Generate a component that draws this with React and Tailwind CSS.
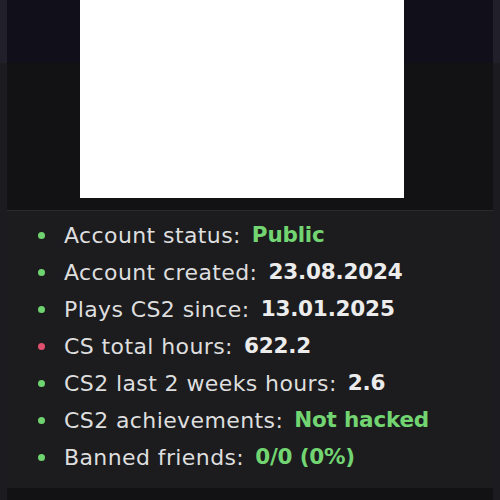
export default function App() {
  const rows = [
    { dot: "bg-[#6fd46f]", label: "Account status:", value: "Public", vc: "text-[#72d572]" },
    { dot: "bg-[#6fd46f]", label: "Account created:", value: "23.08.2024", vc: "text-[#ececec]" },
    { dot: "bg-[#6fd46f]", label: "Plays CS2 since:", value: "13.01.2025", vc: "text-[#ececec]" },
    { dot: "bg-[#e0506e]", label: "CS total hours:", value: "622.2", vc: "text-[#ececec]" },
    { dot: "bg-[#6fd46f]", label: "CS2 last 2 weeks hours:", value: "2.6", vc: "text-[#ececec]" },
    { dot: "bg-[#6fd46f]", label: "CS2 achievements:", value: "Not hacked", vc: "text-[#72d572]" },
    { dot: "bg-[#6fd46f]", label: "Banned friends:", value: "0/0 (0%)", vc: "text-[#72d572]" },
  ];
  return (
    <div className="w-[500px] h-[500px] bg-[linear-gradient(to_bottom,#211f2a_63px,#1c1b1f_63px)] flex flex-col overflow-hidden" style={{ fontFamily: "'DejaVu Sans', Verdana, sans-serif" }}>
      <div className="mx-[7px] flex flex-col flex-1">
        <div className="h-[211px] bg-[linear-gradient(to_bottom,#11101a_63px,#121215_63px)] flex shrink-0 border-b border-[#2a2a2d]">
          <div className="w-[324px] h-[198px] bg-white ml-[73px]" />
        </div>
        <div className="bg-[#1c1c1e] flex flex-col pl-[31px] pt-[6px] flex-1">
          {rows.map((r, i) => (
            <div key={i} className="h-[37px] flex items-center">
              <span className={`w-[7px] h-[7px] rounded-full ${r.dot}`} />
              <span className="ml-[19px] text-[22px] tracking-[0.4px] text-[#dedede]">{r.label}</span>
              <span className={`ml-[11px] text-[21.5px] tracking-[-0.2px] font-bold ${r.vc}`}>{r.value}</span>
            </div>
          ))}
        </div>
        <div className="h-[12px] bg-[#121214] shrink-0" />
      </div>
    </div>
  );
}
